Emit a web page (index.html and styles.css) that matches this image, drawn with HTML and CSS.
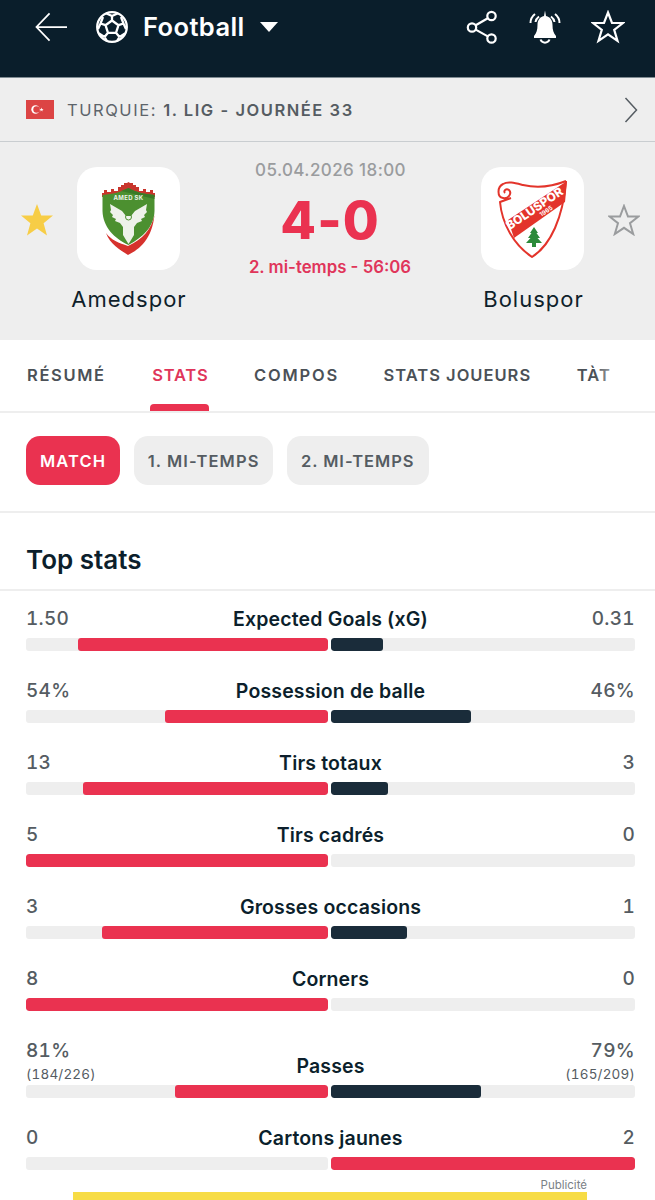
FILE: index.html
```html
<!DOCTYPE html>
<html lang="fr">
<head>
<meta charset="utf-8">
<title>Amedspor - Boluspor</title>
<link rel="stylesheet" href="styles.css">
</head>
<body>
<div class="page">
  <header class="topbar">
    <div class="topbar-left">
      <svg class="ic-back" viewBox="0 0 34 32"><path d="M33 15.500H2M15 1.500 1.500 15.500 15 29.500"/></svg>
      <svg class="ic-ball" viewBox="0 0 34 34"><circle cx="17" cy="17" r="14.800"/><path d="M17 10.500 23.500 15.200 21 22.800H13L10.500 15.200ZM17 10.500V6M17 6 11 3.200M17 6 23 3.200M23.500 15.200 28.500 13.500M28.500 13.500 31 19M28.500 13.500 26 7M10.500 15.200 5.500 13.500M5.500 13.500 3 19M5.500 13.500 8 7M21 22.800 24.500 27M24.500 27 30 23.500M24.500 27 22 31M13 22.800 9.500 27M9.500 27 4 23.500M9.500 27 12 31"/></svg>
      <span class="sport">Football</span>
      <svg class="ic-caret" viewBox="0 0 18 10"><path d="M0 0H18L9 10Z"/></svg>
    </div>
    <div class="topbar-right">
      <svg class="ic-share" viewBox="0 0 32 34"><circle cx="25.500" cy="6" r="4.200"/><circle cx="6" cy="17.500" r="4.200"/><circle cx="25.500" cy="28.500" r="4.200"/><path d="M21.800 8.200 9.700 15.300M9.700 19.600 21.800 26.400"/></svg>
      <svg class="ic-bell" viewBox="0 0 34 34"><path class="bell-body" d="M17 0.500 18 6C22.500 7 24.500 10.500 24.500 15 24.500 20 25.500 23 28 26V28H6V26C8.500 23 9.500 20 9.500 15 9.500 10.500 11.500 7 16 6Z"/><path class="bell-line" d="M12.500 29.500A4.800 4.800 0 0 0 21.500 29.500M7 4C3.800 6.500 2.500 9 2.500 13M11 6.500C9 8 7.800 9.500 7.500 12M27 4C30.200 6.500 31.500 9 31.500 13M23 6.500C25 8 26.200 9.500 26.500 12"/></svg>
      <svg class="ic-fav" viewBox="0 0 34 34"><path d="M17 2.500 21 13H32L23.200 19.800 26.500 30.800 17 24.300 7.500 30.800 10.800 19.800 2 13H13Z"/></svg>
    </div>
  </header>

  <nav class="league">
    <svg class="flag" viewBox="0 0 28 19"><rect width="28" height="19" fill="#dc4444"/><circle cx="9.500" cy="9.500" r="4.200" fill="#fff"/><circle cx="10.600" cy="9.500" r="3.300" fill="#dc4444"/><path d="M15.500 7.500 16 9 17.600 9 16.300 10 16.800 11.500 15.500 10.600 14.200 11.500 14.700 10 13.400 9 15 9Z" fill="#fff"/></svg>
    <span class="league-name">TURQUIE: <b>1. LIG - JOURNÉE 33</b></span>
    <svg class="ic-next" viewBox="0 0 14 26"><path d="M1.500 1 12.500 13 1.500 25"/></svg>
  </nav>

  <section class="match">
    <svg class="star star-on" viewBox="0 0 32 32"><path d="M16 0 20.200 11.600H32L22.600 19.200 26 31.500 16 24.600 6 31.500 9.400 19.200 0 11.600H11.800Z"/></svg>
    <div class="crest">
      <svg viewBox="0 0 103 103">
        <path d="M29 66C33 77 43 83 51 88 63 82 75 72 77.500 48 74 63 66 72 51 79 42 76 34 73 29 66Z" fill="#d6322d"/>
        <path d="M25 26H27V23H30V25H34V22H37V24H41V20H44V18H47V16H50L51.500 15 53 16H56V18H59V20H62V24H66V22H69V25H73V23H76V26H78V30H25Z" fill="#c8352c"/>
        <path d="M25.500 28C36 27 44 25 51.500 21 59 25 67 27 77.500 28V44C77 60 66 70 51.500 78 37 71 26 60 25.500 44Z" fill="#4c9030"/>
        <path d="M51.500 21C59 25 67 27 77.500 28V32L44 24Z" fill="#3a7a26"/>
        <path d="M33 37 45 44 49 49H54L58 44 70 37 69 43 70 45 67 48 68 50 64 52 65 54 60 56 57 60V68L54 73 51.500 77 49 73 46 68V60L43 56 38 54 39 52 35 50 36 48 33 45 34 43Z" fill="#eef2ea"/>
        <circle cx="51.500" cy="50" r="3" fill="none" stroke="#4c9030" stroke-width="1"/>
        <text class="amed-text" x="51.500" y="33" text-anchor="middle">AMED SK</text>
      </svg>
    </div>
    <div class="score-box">
      <div class="date">05.04.2026 18:00</div>
      <div class="score">4-0</div>
      <div class="status">2. mi-temps - 56:06</div>
    </div>
    <div class="crest">
      <svg viewBox="0 0 103 103">
        <path d="M85 14C70 20 55 21 42 18 34 16 27 14 22 17 16 20 16 30 22 31 28 32 31 26 28 23 25 21 22 24 24 26M30 31 19 35C21 57 33 78 51 90 70 78 82 50 85 14" fill="none" stroke="#e3342b" stroke-width="2" stroke-linejoin="round"/>
        <path d="M86 14 84 35 33 71 27 53Z" fill="#e3342b"/>
        <g transform="rotate(-34 57 43)">
          <text class="bolu-name" x="55" y="44" text-anchor="middle">BOLUSPOR</text>
          <text class="bolu-year" x="63" y="50.500" text-anchor="middle">1965</text>
        </g>
        <path d="M53 60 57 66H55.500L59 71H56.500L61 76H55V80H51V76H45L49.500 71H47L50.500 66H49Z" fill="#2c8a3a"/>
      </svg>
    </div>
    <svg class="star star-off" viewBox="0 0 32 32"><path d="M16 2 20 12.500H30.500L22 19.200 25.200 30 16 23.800 6.800 30 10 19.200 1.500 12.500H12Z"/></svg>
    <div class="team team-home">Amedspor</div>
    <div class="team team-away">Boluspor</div>
  </section>

  <nav class="tabs">
    <a class="tab tab-wide">RÉSUMÉ</a>
    <a class="tab tab-tight tab-active">STATS</a>
    <a class="tab tab-wider">COMPOS</a>
    <a class="tab tab-snug">STATS JOUEURS</a>
    <a class="tab tab-last">TÀT</a>
    <span class="tabs-fade"></span>
  </nav>

  <div class="pills">
    <a class="pill pill-active">MATCH</a>
    <a class="pill">1. MI-TEMPS</a>
    <a class="pill pill-narrow">2. MI-TEMPS</a>
  </div>

  <h2 class="section-title">Top stats</h2>

  <section class="stats">
    <div class="stat">
      <div class="stat-head"><div class="val">1.50</div><div class="label">Expected Goals (xG)</div><div class="val val-r">0.31</div></div>
      <div class="bars"><div class="track track-l"><div class="fill home" style="width:82.8%"></div></div><div class="track"><div class="fill away" style="width:17.2%"></div></div></div>
    </div>
    <div class="stat">
      <div class="stat-head"><div class="val">54%</div><div class="label">Possession de balle</div><div class="val val-r">46%</div></div>
      <div class="bars"><div class="track track-l"><div class="fill home" style="width:54%"></div></div><div class="track"><div class="fill away" style="width:46%"></div></div></div>
    </div>
    <div class="stat">
      <div class="stat-head"><div class="val">13</div><div class="label">Tirs totaux</div><div class="val val-r">3</div></div>
      <div class="bars"><div class="track track-l"><div class="fill home" style="width:81.2%"></div></div><div class="track"><div class="fill away" style="width:18.8%"></div></div></div>
    </div>
    <div class="stat">
      <div class="stat-head"><div class="val">5</div><div class="label">Tirs cadrés</div><div class="val val-r">0</div></div>
      <div class="bars"><div class="track track-l"><div class="fill home" style="width:100%"></div></div><div class="track"><div class="fill away" style="width:0%"></div></div></div>
    </div>
    <div class="stat">
      <div class="stat-head"><div class="val">3</div><div class="label">Grosses occasions</div><div class="val val-r">1</div></div>
      <div class="bars"><div class="track track-l"><div class="fill home" style="width:75%"></div></div><div class="track"><div class="fill away" style="width:25%"></div></div></div>
    </div>
    <div class="stat">
      <div class="stat-head"><div class="val">8</div><div class="label">Corners</div><div class="val val-r">0</div></div>
      <div class="bars"><div class="track track-l"><div class="fill home" style="width:100%"></div></div><div class="track"><div class="fill away" style="width:0%"></div></div></div>
    </div>
    <div class="stat">
      <div class="stat-head"><div class="val">81%<small>(184/226)</small></div><div class="label">Passes</div><div class="val val-r">79%<small>(165/209)</small></div></div>
      <div class="bars"><div class="track track-l"><div class="fill home" style="width:50.6%"></div></div><div class="track"><div class="fill away" style="width:49.4%"></div></div></div>
    </div>
    <div class="stat">
      <div class="stat-head"><div class="val">0</div><div class="label">Cartons jaunes</div><div class="val val-r">2</div></div>
      <div class="bars"><div class="track track-l"><div class="fill away-red" style="width:0%"></div></div><div class="track"><div class="fill away-red" style="width:100%"></div></div></div>
    </div>
  </section>

  <aside class="ad">
    <div class="ad-label">Publicité</div>
    <div class="ad-banner"></div>
  </aside>
</div>
</body>
</html>
```
FILE: styles.css
```css
* { box-sizing: border-box; }
html, body { margin: 0; padding: 0; overflow: hidden; background: #fff; }
body { font-family: Inter, "Liberation Sans", sans-serif; color: #0c1f2c; }
.page { width: 655px; height: 1200px; overflow: hidden; }

/* Top bar */
.topbar { height: 78px; background: #0a1e2b; border-bottom: 1px solid #7f8b92; display: flex; justify-content: space-between; align-items: flex-start; padding: 10px 30px 0 35px; }
.topbar-left { display: flex; align-items: center; height: 34px; }
.topbar-right { display: flex; align-items: center; height: 34px; }
.ic-back { width: 33px; height: 31px; fill: none; stroke: #fff; stroke-width: 1.800; }
.ic-ball { width: 34px; height: 34px; margin-left: 27px; fill: none; stroke: #fff; stroke-width: 2.300; }
.sport { margin-left: 14px; padding-bottom: 2px; color: #fff; font-size: 25.500px; font-weight: 600; letter-spacing: 0.400px; }
.ic-caret { width: 18px; height: 10px; margin-left: 15px; fill: #fff; }
.ic-share { width: 32px; height: 34px; fill: none; stroke: #fff; stroke-width: 2.200; }
.ic-bell { width: 34px; height: 34px; margin-left: 30px; }
.bell-body { fill: #fff; }
.bell-line { fill: none; stroke: #fff; stroke-width: 2; }
.ic-fav { width: 34px; height: 34px; margin-left: 29px; fill: none; stroke: #fff; stroke-width: 2.200; }

/* League bar */
.league { height: 64px; background: #eeeeee; border-bottom: 1px solid #c9cdd0; display: flex; align-items: center; padding: 0 17px 0 26px; }
.flag { width: 28px; height: 19px; flex: none; }
.league-name { margin-left: 13px; flex: 1; font-size: 16.500px; letter-spacing: 1.550px; color: #5d646a; white-space: nowrap; }
.league-name b { font-weight: 600; color: #555c62; }
.ic-next { width: 14px; height: 26px; fill: none; stroke: #555c62; stroke-width: 1.500; }

/* Match header */
.match { height: 198px; background: #eeeeee; display: grid; grid-template-columns: 32px 139px 1fr 140px 32px; grid-template-rows: 103px auto; column-gap: 6px; padding: 25px 15px 0 21px; }
.star { width: 32px; height: 32px; align-self: center; margin-top: 2px; }
.star-on { fill: #f7cd46; }
.star-off { fill: none; stroke: #9a9c9e; stroke-width: 2; }
.crest { width: 103px; height: 103px; background: #fff; border-radius: 20px; justify-self: center; }
.crest svg { display: block; width: 103px; height: 103px; }
.amed-text { font-size: 6px; font-weight: 700; fill: #eef2ea; letter-spacing: 0.300px; }
.bolu-name { font-size: 12px; font-weight: 800; fill: #fff; }
.bolu-year { font-size: 6px; font-weight: 700; fill: #fff; }
.score-box { grid-row: 1 / span 2; grid-column: 3; display: flex; flex-direction: column; align-items: center; margin-top: -8px; }
.date { font-size: 17px; font-weight: 500; color: #9a9c9e; line-height: 22px; letter-spacing: 0.400px; padding-left: 1px; }
.score { font-size: 52px; font-weight: 800; color: #ea3250; line-height: 54px; margin-top: 13px; letter-spacing: 1px; }
.status { font-size: 16.800px; font-weight: 600; color: #e0355a; line-height: 22px; margin-top: 8px; }
.team { font-size: 22px; line-height: 28px; letter-spacing: 1px; text-align: center; margin-top: 15px; padding-left: 1px; color: #0f1f2b; }
.team-home { grid-column: 2; grid-row: 2; }
.team-away { grid-column: 4; grid-row: 2; padding-left: 3px; }

/* Tabs */
.tabs { position: relative; height: 73px; border-bottom: 2px solid #eeeeee; display: flex; gap: 46.600px; padding-left: 27px; overflow: hidden; }
.tab { position: relative; height: 71px; line-height: 70px; font-size: 16.500px; font-weight: 600; letter-spacing: 1.150px; color: #4b5157; white-space: nowrap; }
.tab-wide { letter-spacing: 1.650px; }
.tab-wider { letter-spacing: 1.800px; margin-left: -1px; }
.tab-tight { letter-spacing: 0.750px; }
.tab-snug { letter-spacing: 1px; margin-left: -2px; }
.tab-last { margin-left: -1px; }
.tab-active { color: #e0355a; }
.tab-active::after { content: ""; position: absolute; left: -2px; right: -1px; bottom: 0; height: 7px; background: #ea3250; border-radius: 4px 4px 0 0; }
.tabs-fade { position: absolute; top: 0; right: 0; width: 60px; height: 71px; background: linear-gradient(to right, rgba(255,255,255,0), #fff 60%); }

/* Pills */
.pills { height: 100px; border-bottom: 2px solid #eeeeee; display: flex; gap: 13.500px; padding: 23px 0 0 26px; }
.pill { height: 49px; padding: 0 14px; line-height: 50px; border-radius: 14px; background: #eeeeee; color: #555c62; font-size: 16.500px; font-weight: 600; letter-spacing: 1.100px; white-space: nowrap; }
.pill-narrow { letter-spacing: 0.950px; }
.pill-active { background: #ea3250; color: #fff; }

/* Section */
.section-title { margin: 0; height: 78px; line-height: 94px; padding-left: 26px; font-size: 26px; font-weight: 600; color: #0c1f2c; border-bottom: 2px solid #eeeeee; }

/* Stats */
.stats { padding: 18px 20px 0 26px; display: flex; flex-direction: column; gap: 30px; }
.stat { display: flex; flex-direction: column; gap: 9px; }
.stat-head { display: grid; grid-template-columns: 1fr auto 1fr; align-items: end; }
.val { font-size: 19px; font-weight: 500; line-height: 20px; color: #555c62; font-variant-numeric: tabular-nums; letter-spacing: 0.300px; }
.val small { display: block; margin: 5px 0 -6px; font-size: 13.500px; font-weight: 400; line-height: 16px; letter-spacing: 0.200px; }
.val-r { text-align: right; }
.label { font-size: 19.500px; font-weight: 600; line-height: 20px; letter-spacing: 0.150px; color: #0c1f2c; text-align: center; }
.bars { display: flex; gap: 3px; }
.track { flex: 1; height: 13px; background: #eeeeee; border-radius: 3px; overflow: hidden; }
.track-l { flex: none; width: 302px; display: flex; justify-content: flex-end; }
.fill { height: 100%; border-radius: 3px; }
.home, .away-red { background: #ea3250; }
.away { background: #1a2c3a; }

/* Ad */
.ad { margin: 8px 68px 0 73px; }
.ad-label { text-align: right; font-size: 11.500px; line-height: 14px; color: #7b8186; }
.ad-banner { height: 40px; background: #f7dc45; }
```
